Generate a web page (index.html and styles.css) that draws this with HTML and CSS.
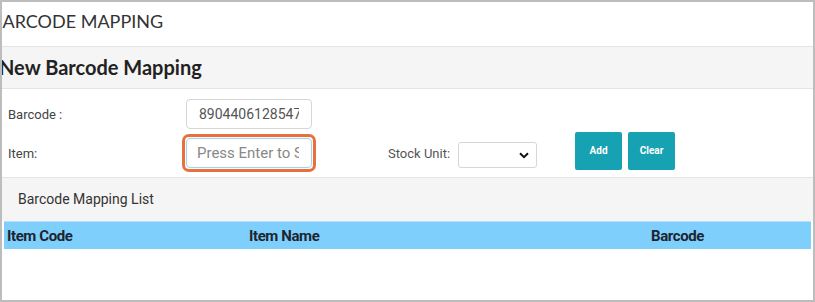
FILE: index.html
```html
<!DOCTYPE html>
<html lang="en">
<head>
    <meta charset="UTF-8">
    <meta name="viewport" content="width=device-width, initial-scale=1.0">
    <title>Barcode Mapping</title>
    <link rel="stylesheet" href="styles.css">
</head>
<body>
    <div class="frame">
        <div class="page-title">BARCODE MAPPING</div>
        <div class="section-head">New Barcode Mapping</div>

        <form class="mapping-form">
            <div class="form-row">
                <label class="field-label" for="barcode">Barcode :</label>
                <input class="text-input" type="text" id="barcode" value="8904406128547">
            </div>
            <div class="form-row">
                <label class="field-label" for="item">Item:</label>
                <div class="focus-ring">
                    <input class="text-input focused" type="text" id="item" placeholder="Press Enter to Search">
                </div>
                <label class="unit-label" for="stockUnit">Stock Unit:</label>
                <div class="select-wrap">
                    <select id="stockUnit" class="unit-select"></select>
                    <svg class="chevron" width="10" height="7" viewBox="0 0 10 7"><path d="M1 1.2l4 4 4-4" fill="none" stroke="#111" stroke-width="2"/></svg>
                </div>
                <button type="button" class="btn btn-add">Add</button>
                <button type="button" class="btn">Clear</button>
            </div>
        </form>

        <div class="list-head">Barcode Mapping List</div>
        <table class="list-table">
            <thead>
                <tr>
                    <th class="col-code">Item Code</th>
                    <th class="col-name">Item Name</th>
                    <th>Barcode</th>
                </tr>
            </thead>
        </table>
    </div>
</body>
</html>
```

FILE: styles.css
```css
body {
    margin: 0;
    font-family: Roboto, "Noto Sans", sans-serif;
    background: #fff;
}
.frame {
    box-sizing: border-box;
    width: 815px;
    height: 302px;
    border: 2px solid #bdbdbd;
    overflow: hidden;
    background: #fff;
}
.page-title {
    height: 44px;
    line-height: 38px;
    font-family: Lato, sans-serif;
    font-size: 18px;
    color: #333;
    text-indent: -11px;
    white-space: nowrap;
    overflow: hidden;
}
.section-head {
    height: 41px;
    line-height: 41px;
    background: #f5f5f5;
    border-top: 1px solid #e4e4e4;
    border-bottom: 1px solid #e4e4e4;
    font-family: Lato, sans-serif;
    font-size: 20px;
    font-weight: 700;
    color: #222;
    text-indent: -3px;
    white-space: nowrap;
    overflow: hidden;
}
.mapping-form {
    padding: 10px 0 5px 6px;
}
.form-row {
    display: flex;
    align-items: center;
}
.form-row + .form-row {
    margin-top: 5px;
}
.field-label {
    width: 178px;
    font-size: 13px;
    color: #444;
}
.text-input {
    box-sizing: border-box;
    width: 126px;
    height: 30px;
    padding: 0 12px;
    border: 1px solid #d6d6d6;
    border-radius: 4px;
    font-family: Roboto, sans-serif;
    font-size: 14px;
    color: #555;
    outline: none;
}
.focus-ring {
    margin-left: -4px;
    padding: 1px;
    border: 3px solid #e8703f;
    border-radius: 7px;
    display: flex;
}
.text-input.focused {
    border-color: #a8d2f0;
    padding-left: 10px;
    font-size: 15px;
}
.text-input.focused::placeholder {
    color: #888;
}
.unit-label {
    margin-left: 72px;
    margin-right: 8px;
    font-size: 13px;
    color: #555;
}
.select-wrap {
    position: relative;
    margin-top: 4px;
}
.unit-select {
    box-sizing: border-box;
    width: 79px;
    height: 26px;
    border: 1px solid #d6d6d6;
    border-radius: 3px;
    background: #fff;
    appearance: none;
    display: block;
}
.chevron {
    position: absolute;
    right: 8px;
    top: 10px;
}
.btn {
    box-sizing: border-box;
    width: 47px;
    height: 38px;
    margin-left: 6px;
    margin-top: -5px;
    border: none;
    border-radius: 2px;
    background: #17a2b4;
    color: #fff;
    font-family: Roboto, sans-serif;
    font-size: 10px;
    font-weight: 700;
}
.btn-add {
    margin-left: 38px;
}
.list-head {
    height: 43px;
    line-height: 43px;
    background: #f5f5f5;
    border-top: 1px solid #e4e4e4;
    padding-left: 16px;
    font-size: 14px;
    color: #333;
}
.list-table {
    width: 807px;
    margin-left: 2px;
    border-collapse: collapse;
}
.list-table th {
    height: 27px;
    padding: 0 0 0 3px;
    background: #7fcffd;
    border-top: 1px solid #b5e1f9;
    text-align: left;
    font-size: 15px;
    font-weight: 700;
    color: #1c2530;
    letter-spacing: -0.4px;
}
.col-code {
    width: 239px;
}
.col-name {
    width: 399px;
}
```
